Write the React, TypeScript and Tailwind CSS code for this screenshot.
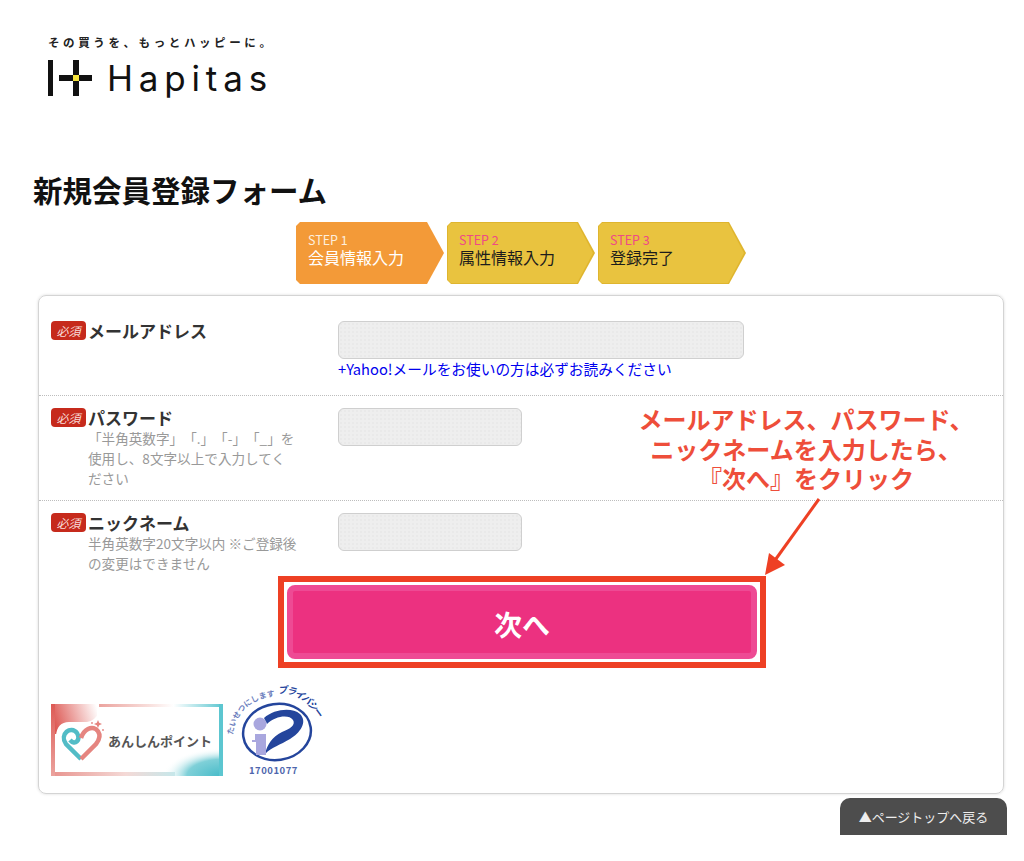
const STEPS = [
  { label: "STEP 1", title: "会員情報入力", active: true },
  { label: "STEP 2", title: "属性情報入力", active: false },
  { label: "STEP 3", title: "登録完了", active: false },
];

const INPUT_CLASS =
  "h-[38px] rounded-[6px] border border-[#cfcfcf] bg-[#eeeeee] bg-[radial-gradient(#e9e9e9_1px,transparent_1px)] bg-[length:4px_4px]";

function Logo() {
  return (
    <div className="flex flex-col">
      <p className="text-[11.5px] leading-[14px] font-bold tracking-[3.6px] text-[#222] whitespace-nowrap">
        その買うを、もっとハッピーに。
      </p>
      <div className="mt-[11px] flex items-center">
        <svg width="44" height="36" viewBox="0 0 44 36">
          <rect x="0" y="0" width="5" height="36" fill="#111" />
          <rect x="25" y="0" width="6" height="36" fill="#111" />
          <rect x="11" y="15" width="33" height="6" fill="#111" />
          <rect x="25" y="15" width="6" height="6" fill="#f5e33c" />
        </svg>
        <span className="ml-[15px] font-['Inter',sans-serif] text-[35px] leading-[36px] tracking-[5.8px] font-normal text-[#111]">
          Hapitas
        </span>
      </div>
    </div>
  );
}

function Step({ label, title, active }: { label: string; title: string; active: boolean }) {
  return (
    <div
      className={`h-[62px] w-[148px] [clip-path:polygon(4px_0,131px_0,148px_31px,131px_62px,4px_62px,0_58px,0_4px)] ${
        active ? "bg-[#f39a38]" : "bg-[#dfb52e]"
      }`}
    >
      <div
        className={`h-full pl-[12px] pt-[10px] [clip-path:polygon(4px_1px,130px_1px,146px_31px,130px_61px,4px_61px,1px_58px,1px_4px)] ${
          active ? "bg-[#f39a38] text-white" : "bg-[#e9c33f] text-[#1c1c1c]"
        }`}
      >
        <p className={`text-[12.5px] leading-[15px] ${active ? "text-[#fdeedd]" : "text-[#ef4a86]"}`}>{label}</p>
        <p className="text-[16px] leading-[21px]">{title}</p>
      </div>
    </div>
  );
}

function RequiredBadge() {
  return (
    <span className="flex h-[19px] w-[35px] shrink-0 items-center justify-center rounded-[4px] bg-[#c62a1c] text-[12px] leading-none text-[#f8dcd8] italic">
      必須
    </span>
  );
}

function Field({
  label,
  hint,
  inputWidth,
  link,
  className,
}: {
  label: string;
  hint?: string;
  inputWidth: string;
  link?: string;
  className: string;
}) {
  return (
    <div className={`flex pl-[12px] ${className}`}>
      <div className="flex w-[287px] shrink-0">
        <RequiredBadge />
        <div className="ml-[2px] mt-[-1px] w-[209px]">
          <p className="text-[17px] leading-[21px] font-bold text-[#333]">{label}</p>
          {hint && <p className="text-[13.6px] leading-[20px] text-[#999] [text-spacing-trim:space-all]">{hint}</p>}
        </div>
      </div>
      <div>
        <div className={`${INPUT_CLASS} ${inputWidth}`} />
        {link && <p className="text-[14.7px] leading-[20px] text-[#0000ee]">{link}</p>}
      </div>
    </div>
  );
}

function AnshinBadge() {
  return (
    <svg width="172" height="72" viewBox="0 0 172 72">
      <defs>
        <linearGradient id="an-top" x1="0" y1="0" x2="1" y2="0">
          <stop offset="0" stopColor="#eba39e" />
          <stop offset="0.4" stopColor="#f8dedb" />
          <stop offset="0.6" stopColor="#ffffff" />
          <stop offset="1" stopColor="#5cc6d0" />
        </linearGradient>
        <linearGradient id="an-bottom" x1="0" y1="0" x2="1" y2="0">
          <stop offset="0" stopColor="#e8938e" />
          <stop offset="0.6" stopColor="#f4d9d6" />
          <stop offset="1" stopColor="#c6e7ea" />
        </linearGradient>
        <linearGradient id="an-left" x1="0" y1="0" x2="0" y2="1">
          <stop offset="0" stopColor="#dd5a55" />
          <stop offset="1" stopColor="#eba39e" />
        </linearGradient>
        <linearGradient id="an-tl" x1="0" y1="0.3" x2="1" y2="0.1">
          <stop offset="0" stopColor="#dd5a55" />
          <stop offset="1" stopColor="#ffffff" />
        </linearGradient>
        <radialGradient id="an-br" cx="1" cy="1" r="1">
          <stop offset="0" stopColor="#45bac8" />
          <stop offset="0.6" stopColor="#7fd0d8" />
          <stop offset="1" stopColor="#ffffff" stopOpacity="0" />
        </radialGradient>
      </defs>
      <rect width="172" height="72" fill="#fff" />
      <rect x="0" y="0" width="46" height="30" fill="url(#an-tl)" />
      <path d="M5 32 Q6 18 18 18 L36 18 Q44 17 48 8 H56 V40 H5 Z" fill="#fff" />
      <rect x="112" y="44" width="60" height="28" fill="url(#an-br)" />
      <rect x="48" y="0" width="124" height="3" fill="url(#an-top)" />
      <rect x="0" y="68" width="124" height="4" fill="url(#an-bottom)" />
      <rect x="0" y="0" width="4" height="72" fill="url(#an-left)" />
      <rect x="168" y="0" width="4" height="72" fill="#5cc6d0" />
      <path d="M30 55 L15 40 C8 30 20 21 26 29 C30 36 24 42 19 36" fill="none" stroke="#52bcc6" strokeWidth="4.5" />
      <path d="M30 55 L45 40 C53 30 45 21 37 25 C33 27 31 31 30 34" fill="none" stroke="#e58580" strokeWidth="4.5" />
      <path d="M47 16 l1.2 2.8 2.8 1.2 -2.8 1.2 -1.2 2.8 -1.2 -2.8 -2.8 -1.2 2.8 -1.2z" fill="#e58580" />
      <circle cx="41" cy="19" r="0.9" fill="#e58580" />
      <circle cx="52" cy="26" r="0.9" fill="#e58580" />
      <text x="57" y="42" fontSize="13" fontWeight="700" fill="#555">
        あんしんポイント
      </text>
    </svg>
  );
}

function PrivacyMark() {
  return (
    <svg width="90" height="94" viewBox="0 0 90 94" className="mt-[-19px] ml-[7px] overflow-visible">
      <defs>
        <path id="pm-arc-a" d="M3 50 C5 28 22 12 48 11" />
        <path id="pm-arc-b" d="M48 9 C62 6 76 14 88 33" />
      </defs>
      <text fontSize="7.8" fontWeight="700" fill="#6b7dbd">
        <textPath href="#pm-arc-a">たいせつにします</textPath>
      </text>
      <text fontSize="9.5" fontWeight="700" fill="#24459c" fontStyle="italic" letterSpacing="-1.4">
        <textPath href="#pm-arc-b">プライバシー</textPath>
      </text>
      <ellipse
        cx="47"
        cy="47"
        rx="34"
        ry="28"
        fill="#fff"
        stroke="#24459c"
        strokeWidth="2.5"
        transform="rotate(-8 47 47)"
      />
      <path
        d="M34 33 C44 24 62 22 70 29 C78 37 70 48 60 54 C50 60 42 62 35 69 C37 60 42 52 52 47 C60 44 66 40 63 35 C59 29 45 31 37 39 Z"
        fill="#24459c"
      />
      <circle cx="30" cy="39" r="6.5" fill="#a9a7de" />
      <path d="M25 49 H36 V70 H26 V57 H22 V55 H25 Z" fill="#a9a7de" />
      <text x="19" y="89" fontSize="9.5" fontWeight="700" fill="#4e66ad" letterSpacing="0.5">
        17001077
      </text>
    </svg>
  );
}

export default function App() {
  return (
    <div className="relative h-[861px] w-[1024px] overflow-hidden bg-white font-['Noto_Sans_CJK_JP','Noto_Sans',sans-serif]">
      <header className="pl-[48px] pt-[35px]">
        <Logo />
      </header>

      <h1 className="mt-[75px] pl-[33px] text-[29.5px] leading-[36px] font-bold text-[#111]">新規会員登録フォーム</h1>

      <div className="mt-[15px] flex gap-[3px] pl-[296px]">
        {STEPS.map((s) => (
          <Step key={s.label} {...s} />
        ))}
      </div>

      <main className="ml-[38px] mr-[20px] mt-[11px] h-[499px] rounded-[8px] border border-[#d4d4d4] shadow-[0_0_3px_rgba(0,0,0,0.15)]">
        <Field
          label="メールアドレス"
          inputWidth="w-[406px]"
          link="+Yahoo!メールをお使いの方は必ずお読みください"
          className="h-[100px] border-b border-dotted border-[#bdbdbd] pt-[25px]"
        />
        <Field
          label="パスワード"
          hint="「半角英数字」「.」「-」「_」を使用し、8文字以上で入力してください"
          inputWidth="w-[184px]"
          className="h-[105px] border-b border-dotted border-[#bdbdbd] pt-[12px]"
        />
        <Field
          label="ニックネーム"
          hint="半角英数字20文字以内 ※ご登録後の変更はできません"
          inputWidth="w-[184px]"
          className="h-[75px] pt-[12px]"
        />

        <div className="ml-[248px] mt-[9px] h-[74px] w-[470px]">
          <button className="h-full w-full rounded-[8px] border-[6px] border-[#ee4a94] bg-[#ec3180] pt-[3px] text-[28px] font-bold text-white">
            次へ
          </button>
        </div>

        <div className="mt-[45px] flex pl-[12px]">
          <AnshinBadge />
          <PrivacyMark />
        </div>
      </main>

      <div className="mt-[4px] ml-[840px] flex h-[37px] w-[167px] items-center justify-center rounded-t-[10px] bg-[#4d4d4d] text-[13px] text-[#eeeeee]">
        ▲ページトップへ戻る
      </div>

      {/* annotation on top of the screenshot */}
      <div className="absolute left-[278px] top-[576px] h-[92px] w-[488px] border-[6px] border-[#ee4024]" />
      <p className="absolute left-[606px] top-[404px] w-[400px] text-center text-[24px] leading-[29.5px] font-bold text-[#ee4e3a] [text-spacing-trim:space-all]">
        メールアドレス、パスワード、
        <br />
        ニックネームを入力したら、
        <br />
        『次へ』をクリック
      </p>
      <svg className="absolute left-[760px] top-[495px]" width="64" height="84" viewBox="0 0 64 84">
        <path d="M59 4 L13 68" stroke="#ee4024" strokeWidth="3" fill="none" />
        <path d="M5 80 L9 58 L25 70 Z" fill="#ee4024" />
      </svg>
    </div>
  );
}
